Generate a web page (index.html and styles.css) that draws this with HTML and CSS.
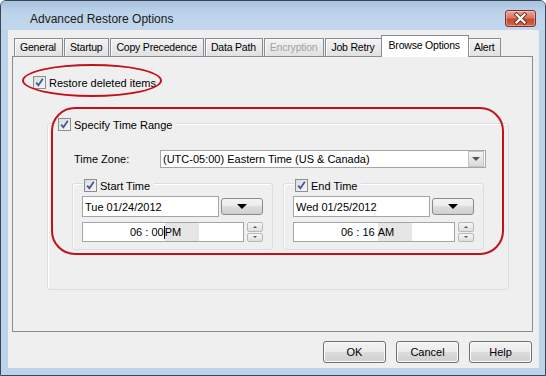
FILE: index.html
```html
<!DOCTYPE html>
<html lang="en">
<head>
  <meta charset="UTF-8" />
  <title>Advanced Restore Options</title>
  <link rel="stylesheet" href="styles.css">
</head>
<body>

  <div class="window">
    <div class="titlebar">
      <span class="title">Advanced Restore Options</span>
      <button class="close" aria-label="Close">
        <svg width="29" height="15" viewBox="0 0 29 15">
          <path d="M10.5 3.5 L18.5 11.5 M18.5 3.5 L10.5 11.5" stroke="#6b2f26" stroke-width="4" stroke-linecap="square"/>
          <path d="M10.5 3.5 L18.5 11.5 M18.5 3.5 L10.5 11.5" stroke="#ffffff" stroke-width="2.2" stroke-linecap="square"/>
        </svg>
      </button>
    </div>

    <div class="client">
      <div class="tabs">
        <div class="tab">General</div>
        <div class="tab">Startup</div>
        <div class="tab">Copy Precedence</div>
        <div class="tab">Data Path</div>
        <div class="tab disabled">Encryption</div>
        <div class="tab">Job Retry</div>
        <div class="tab active">Browse Options</div>
        <div class="tab">Alert</div>
      </div>

      <div class="panel">
        <label class="check restore">
          <span class="box"><svg width="11" height="11" viewBox="0 0 11 11"><path d="M2.2 5.6 L4.4 8.3 L8.8 1.8" fill="none" stroke="#3b5796" stroke-width="1.7"/></svg></span>
          Restore deleted items
        </label>

        <div class="group range">
          <label class="check legend">
            <span class="box"><svg width="11" height="11" viewBox="0 0 11 11"><path d="M2.2 5.6 L4.4 8.3 L8.8 1.8" fill="none" stroke="#3b5796" stroke-width="1.7"/></svg></span>
            Specify Time Range
          </label>

          <div class="tz-row">
            <span class="tz-label">Time Zone:</span>
            <div class="combo">
              <span class="combo-text">(UTC-05:00) Eastern Time (US &amp; Canada)</span>
              <span class="combo-btn"><span class="tri-small"></span></span>
            </div>
          </div>

          <div class="time-groups">
            <div class="group sub">
              <label class="check legend">
                <span class="box"><svg width="11" height="11" viewBox="0 0 11 11"><path d="M2.2 5.6 L4.4 8.3 L8.8 1.8" fill="none" stroke="#3b5796" stroke-width="1.7"/></svg></span>
                Start Time
              </label>
              <div class="date-row">
                <div class="field date">Tue 01/24/2012</div>
                <button class="drop"><span class="tri"></span></button>
              </div>
              <div class="time-row">
                <div class="field time">06 : 00<span class="caret"></span><span class="ampm">PM</span></div>
                <div class="spin"><span class="up"></span><span class="down"></span></div>
              </div>
            </div>

            <div class="group sub">
              <label class="check legend">
                <span class="box"><svg width="11" height="11" viewBox="0 0 11 11"><path d="M2.2 5.6 L4.4 8.3 L8.8 1.8" fill="none" stroke="#3b5796" stroke-width="1.7"/></svg></span>
                End Time
              </label>
              <div class="date-row">
                <div class="field date">Wed 01/25/2012</div>
                <button class="drop"><span class="tri"></span></button>
              </div>
              <div class="time-row">
                <div class="field time">06 : 16 <span class="ampm">AM</span></div>
                <div class="spin"><span class="up"></span><span class="down"></span></div>
              </div>
            </div>
          </div>
        </div>

        <!-- red annotation marks drawn over the dialog -->
        <div class="mark mark-restore"></div>
        <div class="mark mark-range"></div>
      </div>

      <div class="actions">
        <button class="btn">OK</button>
        <button class="btn">Cancel</button>
        <button class="btn">Help</button>
      </div>
    </div>
  </div>

</body>
</html>
```

FILE: styles.css
```css
body {
  margin: 0;
  width: 546px;
  height: 376px;
  overflow: hidden;
  background: #ffffff;
  font-family: "Liberation Sans", Arial, sans-serif;
  font-size: 11px;
  color: #000;
}
.window {
  width: 546px;
  height: 376px;
  box-sizing: border-box;
  border: 1px solid #3a4656;
  border-radius: 6px 6px 0 0;
  background: #bcd3ea;
  display: flex;
  flex-direction: column;
}
.titlebar {
  height: 29px;
  display: flex;
  justify-content: space-between;
  align-items: flex-start;
  padding: 0 9px 0 29px;
  border-radius: 5px 5px 0 0;
  background: linear-gradient(#a9c3df 0%, #bcd3ea 40%, #c2d7ed 100%);
}
.title {
  font-size: 12px;
  color: #1a1a1a;
  margin-top: 11px;
}
.close {
  margin-top: 9px;
  width: 31px;
  height: 17px;
  padding: 0;
  border: 1px solid #7c3128;
  border-radius: 3px;
  background: linear-gradient(#e9a899 0%, #d9765f 45%, #c44a31 55%, #d3654b 100%);
  box-shadow: inset 0 0 0 1px rgba(255,255,255,0.35);
  display: flex;
  align-items: center;
  justify-content: center;
}
.client {
  flex: 1;
  margin: 0 6px 7px 7px;
  background: #efefef;
  padding-top: 5px;
  display: flex;
  flex-direction: column;
}
.tabs {
  height: 21px;
  display: flex;
  align-items: flex-end;
  margin-left: 6px;
  position: relative;
  z-index: 1;
}
.tab {
  height: 17px;
  line-height: 17px;
  padding: 0 6px 0 5px;
  margin-right: 1px;
  font-size: 10.5px;
  letter-spacing: -0.2px;
  border: 1px solid #898c95;
  border-bottom: none;
  background: linear-gradient(#f3f3f3, #e1e1e1);
  box-shadow: inset 1px 1px 0 #fafafa;
}
.tab.disabled {
  color: #a3a3a3;
}
.tab.active {
  height: 21px;
  line-height: 19px;
  padding: 0 8px 0 7px;
  margin: 0 -1px -1px -2px;
  background: #ffffff;
  box-shadow: none;
}
.panel {
  position: relative;
  margin-left: 4px;
  width: 521px;
  height: 276px;
  box-sizing: border-box;
  border: 1px solid #898c95;
  padding: 19px 0 0 20px;
}
.check {
  display: flex;
  align-items: center;
  gap: 3px;
  height: 13px;
}
.box {
  width: 11px;
  height: 11px;
  border: 1px solid #8e8f8f;
  background: linear-gradient(135deg, #dcdcdc, #f6f6f6);
  display: flex;
}
.restore {
  width: max-content;
}
.group {
  border: 1px solid #d5dfe5;
  border-radius: 3px;
  box-shadow: inset 1px 1px 0 #ffffff;
}
.legend {
  width: max-content;
  margin: -6px 0 0 8px;
  padding: 0 4px 0 2px;
  background: #efefef;
}
.range {
  margin: 34px 0 0 14px;
  width: 462px;
  box-sizing: border-box;
  padding-bottom: 39px;
}
.tz-row {
  display: flex;
  align-items: center;
  margin-top: 19px;
  padding-left: 26px;
}
.tz-label {
  width: 86px;
}
.combo {
  width: 326px;
  height: 18px;
  box-sizing: border-box;
  border: 1px solid #a5a5a5;
  background: #fff;
  display: flex;
  align-items: center;
  justify-content: space-between;
  padding-left: 2px;
}
.combo-btn {
  width: 14px;
  height: 14px;
  margin-right: 1px;
  border: 1px solid #c2c2c2;
  background: linear-gradient(#f4f4f4, #dadada);
  display: flex;
  align-items: center;
  justify-content: center;
}
.tri-small {
  width: 0;
  height: 0;
  border-left: 4px solid transparent;
  border-right: 4px solid transparent;
  border-top: 4px solid #555;
}
.time-groups {
  display: flex;
  gap: 10px;
  margin: 15px 0 0 24px;
}
.sub {
  width: 201px;
  box-sizing: border-box;
  padding: 0 0 7px 9px;
}
.sub .legend {
  margin: -5px 0 0 1px;
  padding: 0 4px 0 1px;
}
.date-row, .time-row {
  display: flex;
  align-items: center;
}
.date-row {
  margin-top: 4px;
}
.time-row {
  margin-top: 5px;
}
.field {
  box-sizing: border-box;
  border: 1px solid #a5a5a5;
  background: #fff;
  display: flex;
  align-items: center;
}
.date {
  width: 137px;
  height: 21px;
  padding-left: 2px;
}
.drop {
  margin-left: 2px;
  width: 42px;
  height: 17px;
  padding: 0;
  border: 1px solid #8a8a8a;
  border-radius: 3px;
  background: linear-gradient(#f4f4f4 0%, #ebebeb 50%, #dddddd 50%, #cfcfcf 100%);
  display: flex;
  align-items: center;
  justify-content: center;
}
.tri {
  width: 0;
  height: 0;
  border-left: 5px solid transparent;
  border-right: 5px solid transparent;
  border-top: 5px solid #000;
}
.time {
  width: 162px;
  height: 20px;
  padding-left: 47px;
  white-space: pre;
}
.caret {
  width: 1px;
  height: 13px;
  background: #000;
}
.ampm {
  background: #e6e6e6;
  height: 18px;
  line-height: 18px;
  padding-right: 18px;
}
.spin {
  margin-left: 3px;
  width: 16px;
  height: 20px;
  display: flex;
  flex-direction: column;
  gap: 1px;
}
.spin span {
  flex: 1;
  border: 1px solid #b8b8b8;
  border-radius: 2px;
  background: linear-gradient(#f6f6f6, #dedede);
  display: flex;
  align-items: center;
  justify-content: center;
}
.spin .up::after {
  content: "";
  border-left: 2px solid transparent;
  border-right: 2px solid transparent;
  border-bottom: 2px solid #555;
}
.spin .down::after {
  content: "";
  border-left: 2px solid transparent;
  border-right: 2px solid transparent;
  border-top: 2px solid #555;
}
.mark {
  position: absolute;
  box-sizing: border-box;
  border: 2px solid #c1121c;
}
.mark-restore {
  left: 9px;
  top: 7px;
  width: 140px;
  height: 33px;
  border-radius: 50%;
}
.mark-range {
  left: 38px;
  top: 50px;
  width: 453px;
  height: 148px;
  border-radius: 24px;
}
.actions {
  display: flex;
  justify-content: flex-end;
  gap: 10px;
  margin-top: 9px;
  padding-right: 7px;
}
.btn {
  width: 63px;
  height: 22px;
  padding: 0;
  font-family: "Liberation Sans", Arial, sans-serif;
  font-size: 11px;
  color: #000;
  border: 1px solid #707070;
  border-radius: 3px;
  background: linear-gradient(#f2f2f2 0%, #ebebeb 50%, #dddddd 50%, #cfcfcf 100%);
  box-shadow: inset 0 0 0 1px #fbfbfb;
}
```
